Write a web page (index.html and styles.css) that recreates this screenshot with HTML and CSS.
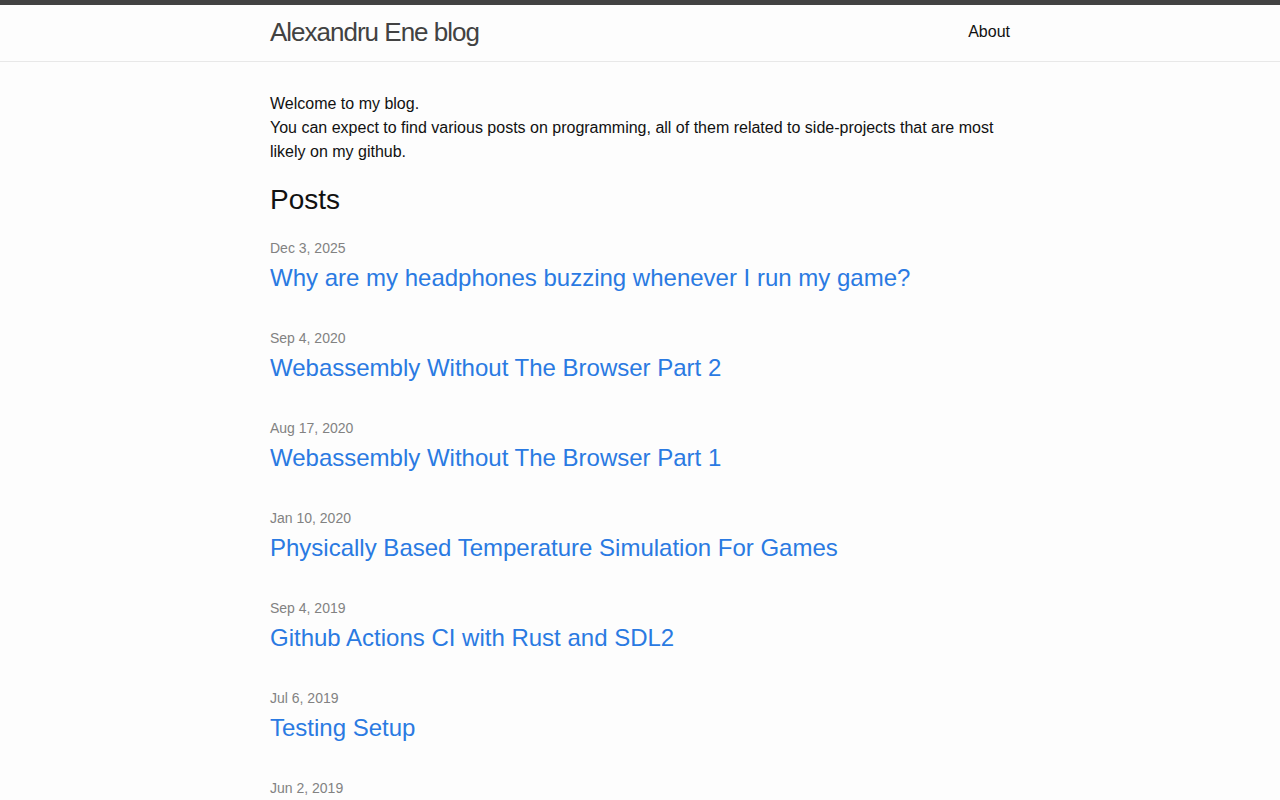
FILE: index.html
```html
<!DOCTYPE html>
<html lang="en">
<head>
<meta charset="utf-8">
<title>Alexandru Ene blog</title>
<link rel="stylesheet" href="styles.css">
</head>
<body>
<header class="site-header">
  <div class="wrapper header-row">
    <a class="site-title" href="#">Alexandru Ene blog</a>
    <nav class="site-nav">
      <a class="page-link" href="#">About</a>
    </nav>
  </div>
</header>
<main class="page-content">
  <div class="wrapper">
    <p class="intro">Welcome to my blog.<br>You can expect to find various posts on programming, all of them related to side-projects that are most likely on my github.</p>
    <h2 class="post-list-heading">Posts</h2>
    <ul class="post-list">
      <li><span class="post-meta">Dec 3, 2025</span><h3 class="post-title"><a class="post-link" href="#">Why are my headphones buzzing whenever I run my game?</a></h3></li>
      <li><span class="post-meta">Sep 4, 2020</span><h3 class="post-title"><a class="post-link" href="#">Webassembly Without The Browser Part 2</a></h3></li>
      <li><span class="post-meta">Aug 17, 2020</span><h3 class="post-title"><a class="post-link" href="#">Webassembly Without The Browser Part 1</a></h3></li>
      <li><span class="post-meta">Jan 10, 2020</span><h3 class="post-title"><a class="post-link" href="#">Physically Based Temperature Simulation For Games</a></h3></li>
      <li><span class="post-meta">Sep 4, 2019</span><h3 class="post-title"><a class="post-link" href="#">Github Actions CI with Rust and SDL2</a></h3></li>
      <li><span class="post-meta">Jul 6, 2019</span><h3 class="post-title"><a class="post-link" href="#">Testing Setup</a></h3></li>
      <li><span class="post-meta">Jun 2, 2019</span></li>
    </ul>
  </div>
</main>
</body>
</html>
```

FILE: styles.css
```css
* { box-sizing: border-box; }

html, body {
  margin: 0;
  padding: 0;
}

body {
  background: #fdfdfd;
  color: #111111;
  font-family: "Liberation Sans", Arial, Helvetica, sans-serif;
  font-size: 16px;
  line-height: 1.5;
}

a { text-decoration: none; }

.wrapper {
  max-width: 800px;
  margin: 0 auto;
  padding: 0 30px;
}

.site-header {
  border-top: 5px solid #424242;
  border-bottom: 1px solid #e8e8e8;
  min-height: 62px;
}

.header-row {
  display: flex;
  justify-content: space-between;
  align-items: flex-start;
}

.site-title {
  font-size: 26px;
  font-weight: 300;
  line-height: 54px;
  letter-spacing: -1px;
  color: #424242;
}

.site-nav {
  line-height: 54px;
}

.page-link {
  color: #111111;
  line-height: 1.5;
}

.page-content {
  padding: 30px 0;
}

.intro {
  margin: 0 0 15px;
}

.post-list-heading {
  font-size: 28px;
  font-weight: 400;
  margin: 0 0 15px;
}

.post-list {
  list-style: none;
  margin: 0 0 15px;
  padding: 0;
}

.post-list li {
  margin-bottom: 30px;
}

.post-meta {
  font-size: 14px;
  color: #828282;
}

.post-title {
  margin: 0;
  font-weight: 400;
}

.post-link {
  display: block;
  font-size: 24px;
  color: #2a7ae2;
}
```
